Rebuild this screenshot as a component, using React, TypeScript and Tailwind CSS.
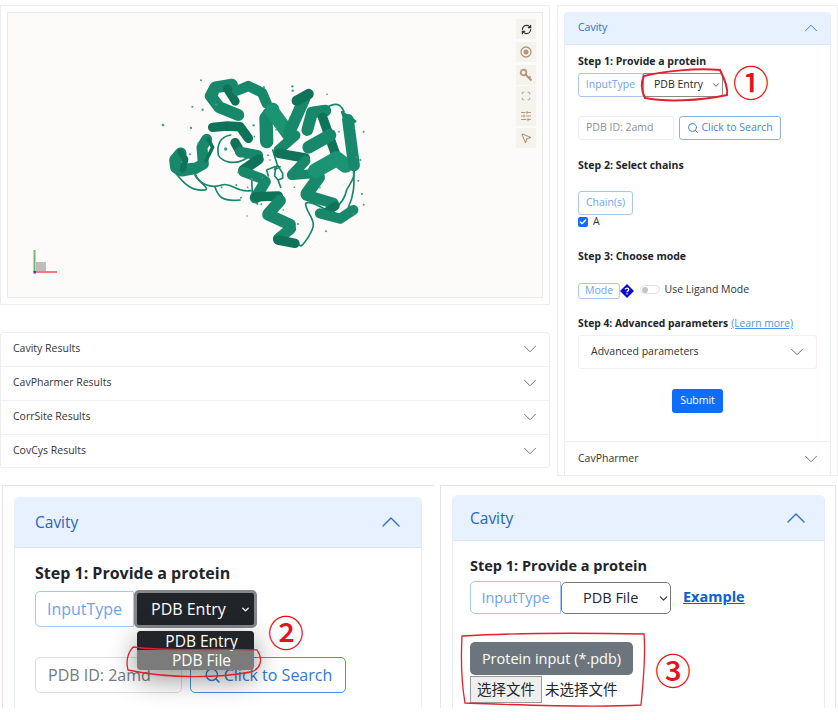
import { ChevronDown, ChevronUp, Search, RefreshCw, Scan, SlidersHorizontal, MousePointer2, Check } from "lucide-react";

const A = "#17896a";
const B = "#0f7359";
const C = "#1b9473";

const ribbons: [string, number, string][] = [
  ["M158 296 L125 302 L108 292 L105 270 L122 250", 30, A],
  ["M122 246 L136 268 L128 298", 16, B],
  ["M165 296 L190 282 L186 232 L200 208", 28, A],
  ["M205 208 L218 232 L198 272", 9, B],
  ["M218 172 L262 168 L300 170 L325 205", 24, B],
  ["M295 135 L238 112 L212 78 L226 52 L276 44", 30, A],
  ["M262 56 L286 94", 22, B],
  ["M292 62 L325 48 L366 68 L380 100", 26, A],
  ["M285 218 L302 248", 24, B],
  ["M300 245 L354 256", 26, A],
  ["M356 268 L310 300", 26, B],
  ["M310 305 L366 326", 26, A],
  ["M376 335 L346 384", 28, A],
  ["M345 380 L415 378", 24, B],
  ["M420 392 L386 430", 30, A],
  ["M384 434 L450 464", 30, A],
  ["M452 476 L415 506", 28, A],
  ["M414 510 L465 520", 24, B],
  ["M380 215 L378 145 L398 118", 34, A],
  ["M395 122 L446 192", 36, C],
  ["M446 192 L494 84", 30, A],
  ["M470 92 L506 72", 26, B],
  ["M466 196 L416 240", 26, A],
  ["M416 250 L496 264", 24, B],
  ["M496 272 L456 314", 26, A],
  ["M456 316 L530 310", 24, A],
  ["M536 322 L500 372", 32, A],
  ["M500 376 L580 400", 28, A],
  ["M586 408 L548 434", 22, B],
  ["M540 430 L600 446 L640 420", 26, A],
  ["M502 180 L516 128 L556 122", 30, A],
  ["M548 142 L592 268", 24, B],
  ["M506 232 L570 196", 32, A],
  ["M526 302 L590 266 L616 286", 38, C],
  ["M624 150 L642 286", 30, A],
  ["M606 126 L646 154 L618 164 Z", 6, A],
];

const loops = [
  "M102 303 C130 340 155 365 195 360 C210 355 180 340 165 315",
  "M165 310 C175 345 215 355 245 345 C275 335 290 370 332 362",
  "M225 352 C235 380 245 395 300 390",
  "M272 195 C240 200 230 225 235 255 C245 275 280 285 310 270 C335 255 345 250 350 265",
  "M335 320 L337 375 M348 392 L352 402 M344 392 L360 392",
  "M465 520 L483 528 C495 520 520 480 520 465 C520 440 495 420 497 400 C510 390 540 410 560 420",
  "M555 115 C580 100 600 95 612 125",
  "M640 290 C650 320 630 340 620 360 C615 385 600 405 580 420",
  "M640 295 C645 350 640 380 625 412",
  "M398 240 L412 285 L428 310 L428 325 L414 330 L404 318 L406 298 L420 290 M412 285 L404 298 M414 330 L422 352 M404 290 L380 300 L385 318",
];

const dots: [number, number, number][] = [
  [183, 31, 3], [372, 51, 3], [457, 49, 3.5], [458, 62, 3.5], [561, 73, 2.5], [157, 110, 3], [188, 119, 3.5], [228, 103, 3.5], [69, 165, 4],
  [153, 174, 3.5], [341, 166, 3.5], [343, 200, 2.5], [408, 179, 2.5], [175, 219, 3], [257, 237, 5], [150, 253, 3], [384, 256, 3], [390, 270, 2.5], [597, 185, 2.5],
  [641, 175, 2.5], [671, 185, 3], [650, 262, 3], [661, 270, 3], [655, 332, 3], [666, 372, 3], [671, 404, 3], [640, 431, 3], [295, 307, 3], [335, 327, 4],
  [367, 323, 2.5], [463, 352, 2.5], [540, 353, 2.5], [245, 352, 3], [289, 345, 3], [323, 352, 2.5], [303, 383, 3], [321, 438, 2.5], [364, 403, 3], [430, 420, 2.5], [474, 462, 3], [558, 484, 3], [452, 300, 2.5],
];

function Protein() {
  return (
    <svg viewBox="0 0 720 570" fill="none" className="absolute left-[132px] top-[57px] h-[190px] w-[240px] blur-[0.4px]">
      {loops.map((d) => (
        <path key={d} d={d} stroke="#17866a" strokeWidth="5" strokeLinecap="round" strokeLinejoin="round" />
      ))}
      {ribbons.map(([d, w, c]) => (
        <path key={d} d={d} stroke={c} strokeWidth={w * 1.18} strokeLinecap="round" strokeLinejoin="round" fill={d.endsWith("Z") ? c : "none"} />
      ))}
      {dots.map(([x, y, r]) => (
        <circle key={`${x}-${y}`} cx={x} cy={y} r={r} fill="#3f9c84" />
      ))}
    </svg>
  );
}

function ToolBtn({ children, className = "" }: { children: React.ReactNode; className?: string }) {
  return <div className={`flex h-[20px] w-[20px] items-center justify-center bg-[#f5f3ee] ${className}`}>{children}</div>;
}

function Viewer() {
  return (
    <div className="h-[300px] w-[550px] border border-[#eeeeee] p-[6px]">
      <div className="relative h-[286px] w-[536px] border border-[#eeebe6] bg-[#fcfbf9]">
        <Protein />
        <div className="absolute left-[508px] top-[6px] flex flex-col text-[#ae977b]">
          <ToolBtn><RefreshCw size={11} strokeWidth={2.6} className="text-[#333333]" /></ToolBtn>
          <ToolBtn className="mt-[3px]">
            <svg viewBox="0 0 12 12" className="h-[12px] w-[12px]">
              <circle cx="6" cy="6" r="5" fill="none" stroke="currentColor" strokeWidth="1.3" />
              <circle cx="6" cy="6" r="2.5" fill="currentColor" />
            </svg>
          </ToolBtn>
          <ToolBtn className="mt-[3px]">
            <svg viewBox="0 0 14 14" fill="none" stroke="currentColor" className="h-[14px] w-[14px]">
              <circle cx="4.5" cy="4.5" r="2.8" strokeWidth="1.8" />
              <path d="M6.5 6.5 L12.5 12.5 M10 10 L11.6 8.6" strokeWidth="2" />
            </svg>
          </ToolBtn>
          <ToolBtn className="mt-[1px]"><Scan size={10} strokeWidth={2.2} /></ToolBtn>
          <ToolBtn><SlidersHorizontal size={12} strokeWidth={2} /></ToolBtn>
          <ToolBtn className="mt-[2px]"><MousePointer2 size={12} strokeWidth={2.2} /></ToolBtn>
        </div>
        <svg viewBox="0 0 30 30" className="absolute left-[24px] top-[236px] h-[30px] w-[30px]">
          <rect x="4" y="13" width="10" height="10" fill="#bdbdbd" />
          <rect x="1.5" y="1" width="2" height="22" fill="#74b574" />
          <rect x="2" y="22" width="23" height="2" fill="#f77a7a" />
          <rect x="1.5" y="22" width="2.5" height="2.5" fill="#3a3ad0" />
        </svg>
      </div>
    </div>
  );
}

function ResultRow({ label, tall }: { label: string; tall?: boolean }) {
  return (
    <div className={`flex items-center justify-between border-b border-[#f0f0f0] pl-[12px] pr-[8px] text-[10.5px] text-[#333333] ${tall ? "h-[34px]" : "h-[33.5px]"}`}>
      <span>{label}</span>
      <ChevronDown size={22} strokeWidth={1} className="text-[#666666]" />
    </div>
  );
}

function TinyBtn({ children, className }: { children: React.ReactNode; className: string }) {
  return <div className={`flex items-center justify-center rounded-[3px] border border-[#a9c8ef] text-[#6ea4ea] ${className}`}>{children}</div>;
}

function StepTitle({ children, className }: { children: React.ReactNode; className: string }) {
  return <div className={`font-bold text-[#212529] ${className}`}>{children}</div>;
}

function MainPanel() {
  return (
    <div className="h-[471px] w-[281px] border border-[#eeeeee] pl-[6px] pt-[6px]">
      <div className="h-[464px] w-[267px] rounded-t-[4px] border-x border-[#e8edf3]">
        <div className="flex h-[33px] items-center justify-between rounded-t-[4px] border-b border-[#dce6f3] bg-[#e7f1ff] pl-[13px] pr-[8px] text-[10.5px] text-[#2f6fc4]">
          <span>Cavity</span>
          <ChevronUp size={22} strokeWidth={1} className="text-[#2f6fc4]" />
        </div>
        <div className="pl-[13px] text-[10.5px]">
          <StepTitle className="mt-[9px] h-[15px] leading-[15px]">Step 1: Provide a protein</StepTitle>
          <div className="mt-[4px] flex h-[24px]">
            <TinyBtn className="w-[65px] rounded-r-none">InputType</TinyBtn>
            <div className="relative h-[24px] w-[80px]">
              <select defaultValue="PDB Entry" className="h-[24px] w-[80px] appearance-none rounded-r-[3px] border border-[#8a8a8a] bg-white pl-[10px] text-[10.5px] text-[#212529]">
                <option>PDB Entry</option>
                <option>PDB File</option>
              </select>
              <ChevronDown size={10} strokeWidth={2} className="pointer-events-none absolute right-[2px] top-[7px] text-[#333333]" />
            </div>
          </div>
          <div className="mt-[19px] flex h-[24px] gap-[5px]">
            <div className="flex w-[96px] items-center rounded-[3px] border border-[#eeeeee] pl-[7px] text-[#8a8f94]">PDB ID: 2amd</div>
            <div className="flex w-[102px] items-center justify-center gap-[2px] rounded-[3px] border border-[#8ab4e6] text-[#3f86dc]">
              <Search size={12} />
              <span>Click to Search</span>
            </div>
          </div>
          <StepTitle className="mt-[18px] h-[15px] leading-[15px]">Step 2: Select chains</StepTitle>
          <TinyBtn className="mt-[18px] h-[24px] w-[55px]">Chain(s)</TinyBtn>
          <div className="mt-[1px] flex h-[11px] items-center gap-[5px] text-[#333333]">
            <span className="flex h-[10px] w-[10px] items-center justify-center rounded-[2px] bg-[#0d6efd]">
              <Check size={8} strokeWidth={4} className="text-white" />
            </span>
            <span>A</span>
          </div>
          <StepTitle className="mt-[22px] h-[15px] leading-[15px]">Step 3: Choose mode</StepTitle>
          <div className="mt-[18px] flex h-[17px] items-center">
            <TinyBtn className="h-[16px] w-[42px]">Mode</TinyBtn>
            <svg viewBox="0 0 14 14" className="ml-[-0.5px] h-[14px] w-[14px]">
              <path d="M7 0 L14 7 L7 14 L0 7 Z" fill="#0a0ad0" />
              <path d="M5.3 5.6 C5.3 3.6 8.8 3.6 8.8 5.6 C8.8 7 7 6.8 7 8.3 M7 9.3 L7 10.4" stroke="white" strokeWidth="1.3" fill="none" />
            </svg>
            <span className="relative ml-[6px] mt-[-2px] h-[9px] w-[20px] rounded-full border border-[#e2e2e2] bg-white">
              <span className="absolute left-[1px] top-[0.5px] h-[6.5px] w-[6.5px] rounded-full bg-[#c4c4c4]" />
            </span>
            <span className="ml-[5px] mt-[-2px] text-[#333333]">Use Ligand Mode</span>
          </div>
          <div className="mt-[17px] flex h-[15px] items-center gap-[3px] text-[10.3px] leading-[15px]">
            <StepTitle className="">Step 4: Advanced parameters</StepTitle>
            <span className="text-[#4d94e8] underline">(Learn more)</span>
          </div>
          <div className="mt-[4px] flex h-[34px] w-[239px] items-center justify-between rounded-[3px] border border-[#f0f0f0] pl-[12px] pr-[8px] text-[#333333]">
            <span>Advanced parameters</span>
            <ChevronDown size={22} strokeWidth={1} className="text-[#666666]" />
          </div>
          <div className="mt-[20px] flex h-[24px] w-[239px] justify-center">
            <div className="flex w-[51px] items-center justify-center rounded-[3px] bg-[#0d6efd] text-white">Submit</div>
          </div>
        </div>
        <div className="mt-[28px] flex h-[35px] items-center justify-between border-y border-[#eeeeee] pl-[13px] pr-[8px] text-[10.5px] text-[#333333]">
          <span>CavPharmer</span>
          <ChevronDown size={22} strokeWidth={1} className="text-[#666666]" />
        </div>
      </div>
    </div>
  );
}

function BigHeader({ className, text }: { className: string; text: string }) {
  return (
    <div className={`flex items-center justify-between rounded-t-[5px] border-b border-[#dce6f3] bg-[#e7f1ff] text-[15.5px] text-[#2565bd] ${className}`}>
      <span className="pt-[2px]">{text}</span>
      <ChevronUp size={32} strokeWidth={1} className="text-[#2f6fc4]" />
    </div>
  );
}

function LeftDetail() {
  return (
    <div className="relative ml-[2px] h-[223px] w-[432px] overflow-hidden border-l border-t border-[#e6e6e6] pl-[11px] pt-[11px]">
      <div className="h-[230px] w-[408px] rounded-t-[5px] border-x border-[#e8edf3]">
        <BigHeader className="h-[51px] pl-[20px] pr-[14px]" text="Cavity" />
        <div className="pl-[20px]">
          <StepTitle className="mt-[14px] h-[22px] text-[16px] leading-[22px]">Step 1: Provide a protein</StepTitle>
          <div className="mt-[6px] flex h-[38px] items-center">
            <div className="flex h-[36px] w-[99px] items-center justify-center rounded-l-[5px] border border-[#a9c8ef] text-[16px] text-[#6ea4ea]">InputType</div>
            <div className="flex h-[38px] w-[123px] items-center justify-between rounded-[5px] border-[3px] border-[#85888c] bg-[#212529] pl-[14px] pr-[3px] text-[16px] text-white">
              <span>PDB Entry</span>
              <ChevronDown size={11} strokeWidth={3} />
            </div>
          </div>
          <div className="mt-[29px] flex h-[36px] gap-[8px] text-[16px]">
            <div className="flex w-[147px] items-center rounded-[5px] border border-[#dddddd] pl-[12px] text-[#75797d]">PDB ID: 2amd</div>
            <div className="flex w-[156px] items-center justify-center gap-[3px] rounded-[5px] border border-[#4a8fdc] text-[#2f78d8]">
              <Search size={17} />
              <span>Click to Search</span>
            </div>
          </div>
        </div>
      </div>
      <div className="absolute left-[134px] top-[145px] w-[117px] overflow-hidden rounded-[4px] bg-[#7b7b7b] pl-[8px] text-center text-[15.5px] leading-[21px] text-white shadow-[0_8px_28px_rgba(0,0,0,0.45)]">
        <div className="ml-[-8px] h-[19px] bg-[#212529] pl-[12px] leading-[20px]">PDB Entry</div>
        <div className="h-[20px] pl-[4px]">PDB File</div>
      </div>
    </div>
  );
}

function RightDetail() {
  return (
    <div className="ml-[6px] h-[223px] w-[396px] overflow-hidden border-x border-t border-[#e6e6e6] pl-[11px] pt-[9px]">
      <div className="h-[230px] w-[373px] rounded-t-[5px] border-x border-[#e8edf3]">
        <BigHeader className="h-[46px] pl-[17px] pr-[12px]" text="Cavity" />
        <div className="pl-[17px]">
          <StepTitle className="mt-[14px] h-[22px] text-[14.5px] leading-[22px]">Step 1: Provide a protein</StepTitle>
          <div className="mt-[4px] flex h-[33px] items-center">
            <div className="flex h-[33px] w-[91px] items-center justify-center rounded-l-[5px] border border-[#a9c8ef] text-[14.5px] text-[#6ea4ea]">InputType</div>
            <div className="relative h-[32px] w-[110px]">
              <select defaultValue="PDB File" className="h-[32px] w-[110px] appearance-none rounded-[5px] border border-[#777777] bg-white pl-[21px] text-[14.5px] text-[#212529]">
                <option>PDB Entry</option>
                <option>PDB File</option>
              </select>
              <ChevronDown size={13} strokeWidth={2} className="pointer-events-none absolute right-[1px] top-[10px] text-[#333333]" />
            </div>
            <span className="ml-[12px] mt-[-1px] text-[14.5px] font-bold text-[#0d5fd0] underline">Example</span>
          </div>
          <div className="mt-[28px] flex h-[33px] w-[163px] items-center justify-center rounded-[5px] bg-[#6c757d] text-[14.5px] text-white">Protein input (*.pdb)</div>
          <div className="mt-[1px] flex h-[27px] items-center text-[14.5px] text-[#212529]">
            <div className="flex h-[27px] w-[72px] items-center justify-center border border-[#9a9a9a] bg-[#efefef]">选择文件</div>
            <span className="ml-[3px]">未选择文件</span>
          </div>
        </div>
      </div>
    </div>
  );
}

export default function App() {
  return (
    <div className="relative h-[720px] w-[838px] overflow-hidden bg-white font-['Open_Sans','Noto_Sans_CJK_SC',sans-serif]">
      <div className="flex gap-[7px] pt-[5px]">
        <div>
          <Viewer />
          <div className="mt-[27px] h-[135px] w-[550px] rounded-t-[4px] border-x border-t border-[#eeeeee]">
            <ResultRow label="Cavity Results" />
            <ResultRow label="CavPharmer Results" tall />
            <ResultRow label="CorrSite Results" tall />
            <ResultRow label="CovCys Results" />
          </div>
        </div>
        <MainPanel />
      </div>
      <div className="mt-[9px] flex">
        <LeftDetail />
        <RightDetail />
      </div>
      <svg viewBox="0 0 838 720" fill="none" className="pointer-events-none absolute left-0 top-0 h-[720px] w-[838px]">
        <path d="M644 76 C665 71 695 68 720 70 C725 80 728 90 727 95 C700 101 665 102 645 98 C641 90 641 82 644 76 Z" stroke="#e3202c" strokeWidth="2" />
        <path d="M133 647 C170 652 220 648 257 650 C264 660 260 670 250 672 C220 678 170 679 128 670 C126 662 127 654 133 647" stroke="#e3202c" strokeWidth="1.3" />
        <path d="M462 636 C510 633 590 633 644 634 C646 655 643 685 641 705 C590 708 520 705 465 703 C461 680 461 655 462 636 Z" stroke="#e3202c" strokeWidth="1.3" />
      </svg>
      <span className="absolute left-[733px] top-[62px] text-[36px] font-medium leading-[44px] text-[#e8101c]">①</span>
      <span className="absolute left-[268px] top-[612px] text-[36px] font-medium leading-[44px] text-[#e8101c]">②</span>
      <span className="absolute left-[655px] top-[650px] text-[36px] font-medium leading-[44px] text-[#e8101c]">③</span>
    </div>
  );
}
